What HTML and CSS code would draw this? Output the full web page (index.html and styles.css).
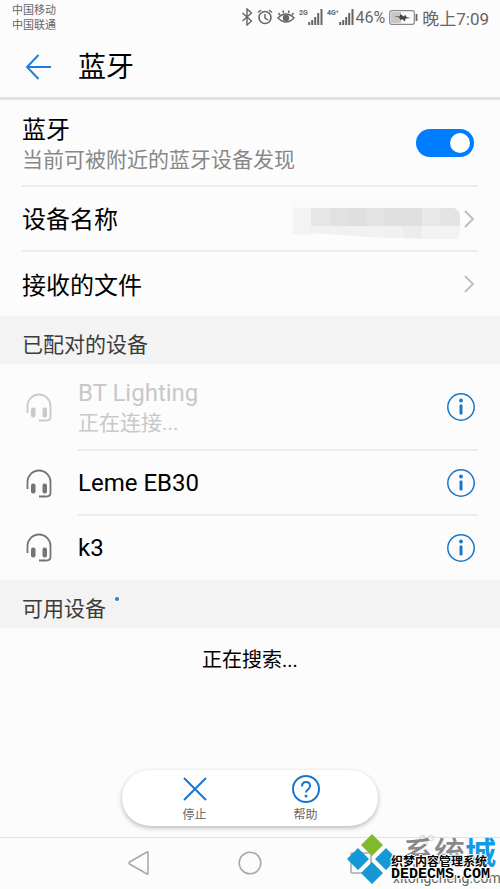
FILE: index.html
```html
<!DOCTYPE html>
<html lang="zh-CN">
<head>
<meta charset="utf-8">
<meta name="viewport" content="width=device-width, initial-scale=1">
<title>蓝牙</title>
<link rel="stylesheet" href="styles.css">
</head>
<body>
<svg class="defs" aria-hidden="true">
  <symbol id="headset" viewBox="0 0 26 30">
    <path d="M1.500 20V13a11.500 11.500 0 0 1 23 0v10.500q0 4-4 4H13" fill="none" stroke="currentColor" stroke-width="1.800"/>
    <rect x="5" y="14.500" width="4.500" height="10" rx="2" fill="currentColor"/>
    <rect x="16.500" y="14.500" width="4.500" height="10" rx="2" fill="currentColor"/>
  </symbol>
  <symbol id="info" viewBox="0 0 30 30">
    <circle cx="15" cy="15" r="13.200" fill="none" stroke="currentColor" stroke-width="1.500"/>
    <circle cx="15" cy="8.500" r="1.900" fill="currentColor"/>
    <rect x="13.500" y="12.500" width="3" height="10" rx="1" fill="currentColor"/>
  </symbol>
  <symbol id="chevron" viewBox="0 0 12 20">
    <path d="M2 2l8 8-8 8" fill="none" stroke="currentColor" stroke-width="1.800"/>
  </symbol>
  <symbol id="signal" viewBox="0 0 15 16">
    <path d="M1.200 16v-3M4.200 16v-5M7.200 16V8M10.200 16V4M13.500 16V0" stroke="currentColor" stroke-width="2"/>
  </symbol>
</svg>

<div class="screen">
  <div class="status">
    <div class="carriers"><span>中国移动</span><span>中国联通</span></div>
    <div class="indicators">
      <svg class="bt" viewBox="0 0 12 18"><path d="M1.500 5l9 8L6 17V1l4.500 4-9 8" fill="none" stroke="currentColor" stroke-width="1.400"/></svg>
      <svg class="alarm" viewBox="0 0 16 16"><circle cx="8" cy="8.500" r="6" fill="none" stroke="currentColor" stroke-width="1.600"/><path d="M8 5v4l3 2M1 3.500L4 1M15 3.500L12 1" fill="none" stroke="currentColor" stroke-width="1.500"/></svg>
      <svg class="eye" viewBox="0 0 18 16"><path d="M1 9q8-8 16 0-8 8-16 0zM3 6L1.500 4M6.500 4L6 1.500M11.500 4l.5-2.500M15 6l1.500-2" fill="none" stroke="currentColor" stroke-width="1.500"/><circle cx="9" cy="9" r="3.200" fill="currentColor"/></svg>
      <span class="net"><b>2G</b><svg viewBox="0 0 15 16"><use href="#signal"/></svg></span>
      <span class="net"><b>4G⁺</b><svg viewBox="0 0 15 16"><use href="#signal"/></svg></span>
      <span class="percent">46%</span>
      <svg class="battery" viewBox="0 0 29 15"><rect x=".7" y=".7" width="24.600" height="13.600" rx="2" fill="none" stroke="#888" stroke-width="1.200"/><path d="M2 2h10v11H2z" fill="#c7c7c7"/><path d="M5 6l6 .5V4l4 2.500 1-2 1.500 2.500 4 1-5 .5-.5 3-3-2.500-1 1.500-2-3z" fill="#444"/><path d="M27.500 4v7" stroke="#666" stroke-width="1.800"/></svg>
      <span>晚上7:09</span>
    </div>
  </div>

  <header class="header">
    <button class="back" aria-label="返回"><svg viewBox="0 0 26 26"><path d="M13.500 1L2 13l11.500 12M2 13h24" fill="none" stroke="currentColor" stroke-width="1.900"/></svg></button>
    <h1>蓝牙</h1>
  </header>

  <main>
    <div class="row tall">
      <label class="label" for="power">蓝牙<small>当前可被附近的蓝牙设备发现</small></label>
      <input class="switch" id="power" type="checkbox" checked>
    </div>
    <a class="row" href="#name"><span class="label">设备名称</span>
      <svg class="mosaic" viewBox="0 0 172 40" aria-hidden="true">
        <path d="M0 4Q10 0 60 2h90v10H2z" fill="#fafafa"/>
        <path d="M2 9h19v27L2 35z" fill="#f3f3f3"/>
        <path d="M20 9h20v18H20z" fill="#e7e7e7"/><path d="M39 9h19v18H39z" fill="#e1e1e1"/><path d="M57 9h19v18H57z" fill="#dedede"/><path d="M75 9h19v18H75z" fill="#e3e3e3"/><path d="M93 9h39v18H93z" fill="#e0e0e0"/><path d="M131 9h19v18h-19z" fill="#e9e9e9"/><path d="M149 9h14q6 2 6 8v10h-20z" fill="#e4e4e4"/>
        <path d="M20 27h92v12q-36 0-60-3l-32-2z" fill="#f1f1f1"/><path d="M112 27h20v13l-20-1z" fill="#ececec"/><path d="M131 27h38v7q0 8-10 8h-14l-14-2z" fill="#f3f3f3"/>
      </svg>
      <svg class="chev" viewBox="0 0 12 20"><use href="#chevron"/></svg></a>
    <a class="row" href="#files"><span class="label">接收的文件</span><svg class="chev" viewBox="0 0 12 20"><use href="#chevron"/></svg></a>

    <h2>已配对的设备</h2>
    <div class="device tall busy">
      <svg class="headset" viewBox="0 0 26 30"><use href="#headset"/></svg>
      <div class="body"><span class="label">BT Lighting<small>正在连接...</small></span>
      <button class="info" aria-label="BT Lighting 详情"><svg viewBox="0 0 30 30"><use href="#info"/></svg></button></div>
    </div>
    <div class="device">
      <svg class="headset" viewBox="0 0 26 30"><use href="#headset"/></svg>
      <div class="body"><span class="label">Leme EB30</span>
      <button class="info" aria-label="Leme EB30 详情"><svg viewBox="0 0 30 30"><use href="#info"/></svg></button></div>
    </div>
    <div class="device">
      <svg class="headset" viewBox="0 0 26 30"><use href="#headset"/></svg>
      <div class="body"><span class="label">k3</span>
      <button class="info" aria-label="k3 详情"><svg viewBox="0 0 30 30"><use href="#info"/></svg></button></div>
    </div>

    <h2>可用设备<i class="spinner"></i></h2>
    <p class="searching">正在搜索...</p>
  </main>

  <div class="actions">
    <button><svg viewBox="0 0 30 30"><path d="M4 4l22 22M26 4L4 26" fill="none" stroke="#1976d2" stroke-width="2"/></svg>停止</button>
    <button><svg viewBox="0 0 30 30"><circle cx="15" cy="15" r="13" fill="none" stroke="#1976d2" stroke-width="2"/><path d="M11 12.500q0-4.500 4-4.500t4 4q0 2-2 3.500t-2 3" fill="none" stroke="#1976d2" stroke-width="2"/><circle cx="15" cy="22" r="1.500" fill="#1976d2"/></svg>帮助</button>
  </div>

  <nav class="nav">
    <button aria-label="后退"><svg viewBox="0 0 24 24"><path d="M21 1.500v21q0 1-1 .5L2.500 13q-1-1 0-2L20 1q1-.5 1 .5z" fill="none" stroke="currentColor" stroke-width="1.600"/></svg></button>
    <button aria-label="主页"><svg viewBox="0 0 24 24"><circle cx="12" cy="12" r="10.800" fill="none" stroke="currentColor" stroke-width="1.600"/></svg></button>
    <button aria-label="最近任务"><svg viewBox="0 0 24 24"><rect x="2" y="2" width="20" height="20" rx="1" fill="none" stroke="currentColor" stroke-width="1.600"/></svg></button>
  </nav>

  <div class="watermark">
    <svg class="logo" viewBox="0 0 48 52"><path d="M25 0l11 11-11 11-11-11z" fill="#82b82c"/><path d="M11 14l11 11-11 11L0 25zM39 14l9 9v4l-9 9-11-11zM25 28l11 11-11 11-11-11z" fill="#1499d6"/></svg>
    <svg class="sprout" viewBox="0 0 24 12"><path d="M12 11V6Q5 8 5 3q4-4 7 3 3-7 7-3 0 5-7 3" fill="none" stroke="#dedede" stroke-width="1.500"/></svg>
    <span class="brand">系统<em>城</em></span>
    <span class="site">xitongcheng.com</span>
    <span class="cms">织梦内容管理系统</span>
    <span class="domain">DEDECMS.COM</span>
  </div>
</div>
</body>
</html>
```
FILE: styles.css
```css
* { box-sizing: border-box; }
body {
  margin: 0;
  background: #fcfcfc;
  color: #000;
  font-family: Roboto, "Noto Sans CJK SC", sans-serif;
}
button { padding: 0; border: 0; background: none; font: inherit; color: inherit; }
svg { display: block; flex: none; }
.defs { position: absolute; width: 0; height: 0; }
.screen { position: relative; display: flex; flex-direction: column; min-height: 100vh; overflow: hidden; }

.status { display: flex; justify-content: space-between; height: 34px; padding: 2px 11px 0 12px; color: #666; }
.carriers { display: flex; flex-direction: column; padding-top: 1px; font-size: 11px; line-height: 15px; }
.indicators { display: flex; align-items: center; gap: 4px; height: 30px; font-size: 17px; white-space: nowrap; }
.bt { width: 12px; height: 18px; }
.alarm { width: 16px; height: 16px; }
.eye { width: 18px; height: 16px; }
.net { display: flex; align-items: flex-start; }
.net b { font-size: 7px; line-height: 8px; }
.net svg { width: 15px; height: 16px; }
.percent { margin-left: -2px; font-size: 16px; }
.battery { width: 29px; height: 15px; }

.header { display: flex; align-items: center; height: 66px; padding: 2px 24px 0; border-bottom: 3px solid #e2e2e2; }
.back { width: 54px; color: #1a7edb; }
.back svg { width: 28px; height: 26px; }
h1 { margin: 0; font-size: 28px; font-weight: 400; line-height: 36px; padding-top: 2px; }

.row { display: flex; align-items: center; justify-content: space-between; height: 65px; margin: 0 22px; border-bottom: 2px solid #ededed; color: #000; text-decoration: none; }
.row.tall { height: 87px; }
.row:has(+ h2) { height: 64px; border-bottom: 0; }
.label { display: flex; flex: 1; flex-direction: column; font-size: 24px; line-height: 32px; }
.row .label { padding-top: 3px; }
.label small { font-size: 21px; line-height: 28px; color: #888; }
.switch { width: 58px; height: 28px; margin: 0 4px 0 0; padding: 4px; border-radius: 14px; background: #007dff; appearance: none; }
.switch::before { content: ""; display: block; width: 20px; height: 20px; margin-left: auto; border-radius: 50%; background: #fff; }
.mosaic { width: 172px; height: 40px; }
.chev { width: 12px; height: 20px; margin-right: 3px; color: #bdbdbd; }

h2 { display: flex; align-items: center; height: 48px; margin: 0; padding: 10px 22px 0; background: #f3f3f3; color: #3c3c3c; font-size: 21px; font-weight: 400; line-height: 32px; }
.device { display: flex; height: 65px; align-items: center; padding: 0 22px 0 26px; }
.device.tall { height: 87px; }
.device:has(+ h2) { height: 64px; }
.headset { width: 26px; height: 30px; margin-right: 26px; color: #757575; }
.busy .headset { color: #c9c9c9; }
.busy .label, .busy small { color: #c8c8c8; }
.body { display: flex; flex: 1; align-items: center; height: 100%; border-bottom: 2px solid #ededed; }
.device:has(+ h2) .body { border-bottom: 0; }
.info { margin-right: 2px; color: #1976c8; }
.info svg { width: 30px; height: 30px; }
.spinner { align-self: flex-start; width: 4px; height: 4px; margin-left: 9px; margin-top: 7px; border-radius: 50%; background: #2386c8; }
.searching { margin: 16px 0; font-size: 20px; line-height: 32px; text-align: center; }

.actions { display: flex; justify-content: center; gap: 81px; width: 256px; height: 56px; margin: auto auto 11px; border-radius: 28px; background: #fff; box-shadow: 0 2px 5px #0004; }
.actions button { display: flex; flex-direction: column; align-items: center; gap: 2px; padding-top: 4px; color: #666; font-size: 12px; line-height: 18px; }
.actions svg { width: 30px; height: 30px; }
.nav { display: flex; justify-content: center; gap: 87px; height: 52px; padding-bottom: 2px; border-top: 1px solid #e2e2e2; color: #aaa; }
.nav button { display: flex; align-items: center; }
.nav svg { width: 24px; height: 24px; }

.watermark { position: absolute; right: 0; bottom: 0; width: 153px; height: 55px; white-space: nowrap; }
.watermark > * { position: absolute; }
.logo { left: 0; top: 0; width: 48px; height: 52px; }
.sprout { left: 68px; top: 0; width: 24px; height: 12px; }
.brand { left: 56px; top: 4px; color: #888; font-size: 31px; font-weight: 500; line-height: 32px; }
.brand em { color: #1499e6; font-style: normal; font-weight: 700; }
.site { left: 46px; top: 36px; color: #666; font-size: 14px; line-height: 16px; }
.cms, .domain { left: 44px; color: #000; font-weight: 700; text-shadow: 1px 0 #fff, -1px 0 #fff, 0 1px #fff, 0 -1px #fff, 1px 1px #fff, -1px -1px #fff; }
.cms { top: 20px; font-size: 12px; line-height: 16px; }
.domain { top: 34px; font-family: "Liberation Mono", monospace; font-size: 15px; line-height: 14px; }
```
